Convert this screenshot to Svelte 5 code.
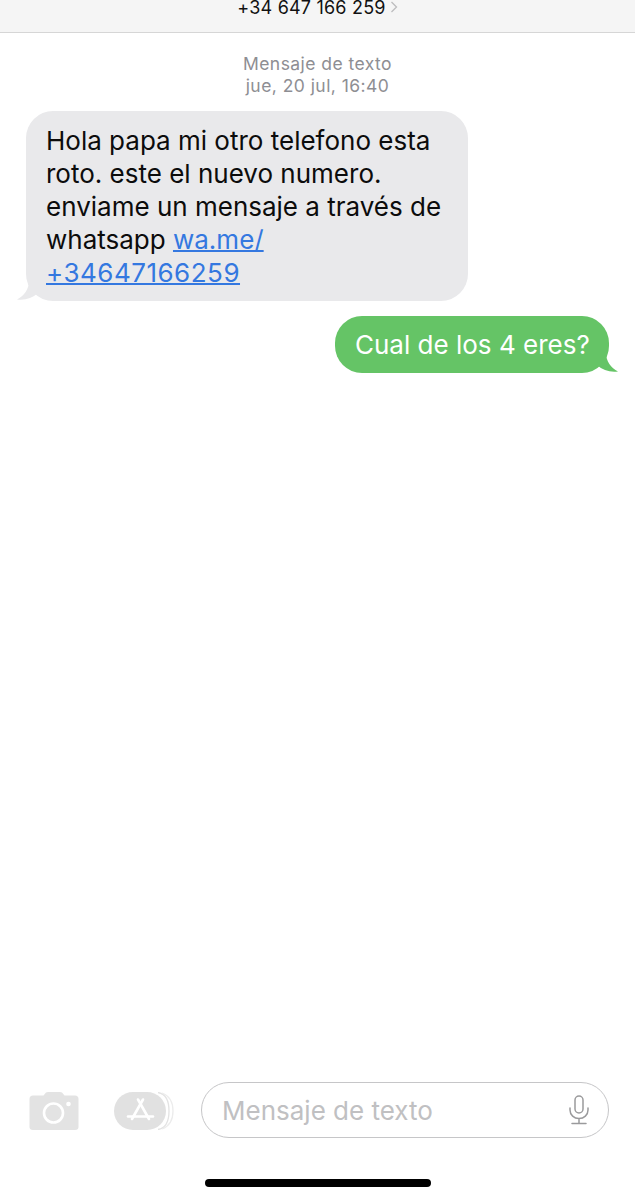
<script>
  const received = ['Hola papa mi otro telefono esta', 'roto. este el nuevo numero.', 'enviame un mensaje a través de'];
</script>

<div class="screen">
  <header class="top">
    <span class="number">+34 647 166 259</span>
    <svg class="chev" width="8" height="12" viewBox="0 0 8 12"><path d="M1.5 1 L6.5 6 L1.5 11" fill="none" stroke="#bcbcbe" stroke-width="1.3"/></svg>
  </header>

  <main class="thread">
    <div class="stamp">
      <div>Mensaje de texto</div>
      <div>jue, 20 jul, 16:40</div>
    </div>

    <div class="row left">
      <div class="bubble in">
        {#each received as line}<div>{line}</div>{/each}
        <div>whatsapp <a href="#wa">wa.me/</a></div>
        <div><a class="digits" href="#wa">+34647166259</a></div>
        <svg class="tail tail-in" width="22" height="20" viewBox="0 0 22 20"><path d="M12 0 C12 8 7 15 0 18.500 C8 19.500 15 17.500 21 12 L21 0 Z" fill="#e9e9eb"/></svg>
      </div>
    </div>

    <div class="row right">
      <div class="bubble out">
        Cual de los 4 eres?
        <svg class="tail tail-out" width="22" height="20" viewBox="0 0 22 20"><path d="M10 0 C10 8 15 15 22 18.500 C14 19.500 7 17.500 1 12 L1 0 Z" fill="#65c466"/></svg>
      </div>
    </div>
  </main>

  <footer class="composer">
    <svg class="cam" width="50" height="38" viewBox="0 0 50 38">
      <path d="M4 3.500 H14.500 L17 0.500 Q18 0 19 0 H31 Q32 0 33 0.500 L35.500 3.500 H46 Q49.500 3.500 49.500 7 V35 Q49.500 38 46 38 H4 Q0.500 38 0.500 35 V7 Q0.500 3.500 4 3.500 Z" fill="#e3e3e3"/>
      <circle cx="24.500" cy="21" r="9.500" fill="none" stroke="#fff" stroke-width="2.600"/>
      <circle cx="39.500" cy="12" r="2.300" fill="#fff"/>
    </svg>

    <svg class="store" width="60" height="38" viewBox="0 0 60 38">
      <path d="M44 0.500 C53 2 55 10 55 19 C55 28 53 36 44 37.500" fill="none" stroke="#e3e3e3" stroke-width="1.300"/>
      <path d="M48 1 C56 4 59 11 59 19 C59 27 56 34 48 37" fill="none" stroke="#ececec" stroke-width="1.300"/>
      <rect x="0" y="0" width="52" height="38" rx="19" fill="#e1e1e1"/>
      <g fill="none" stroke="#fff" stroke-width="2.600" stroke-linecap="round">
        <path d="M29 7.500 L18 27"/>
        <path d="M24 7.500 L35 27"/>
        <path d="M14 24.500 H39"/>
      </g>
    </svg>

    <div class="input">
      <span class="placeholder">Mensaje de texto</span>
      <svg class="mic" width="22" height="30" viewBox="0 0 22 30">
        <rect x="7" y="1" width="8" height="17" rx="4" fill="none" stroke="#9a9a9c" stroke-width="1.500"/>
        <path d="M2 13 V15 C2 20 6 23.500 11 23.500 C16 23.500 20 20 20 15 V13 M11 23.500 V28.500 M4 28.500 H18" fill="none" stroke="#9a9a9c" stroke-width="1.500" stroke-linecap="round"/>
      </svg>
    </div>
  </footer>

  <div class="home-wrap"><div class="home"></div></div>
</div>

<style>
  :global(body) {
    margin: 0;
    background: #fff;
  }
  .screen {
    width: 635px;
    height: 1200px;
    display: flex;
    flex-direction: column;
    overflow: hidden;
    font-family: Inter, "Liberation Sans", sans-serif;
    background: #fff;
  }
  .top {
    height: 32px;
    flex: none;
    background: #f5f5f5;
    border-bottom: 1px solid #d6d6d6;
    display: flex;
    justify-content: center;
    align-items: flex-start;
    gap: 4px;
  }
  .number {
    font-size: 18px;
    line-height: 16px;
    letter-spacing: 0.2px;
    color: #111;
  }
  .chev {
    margin-top: 1px;
  }
  .thread {
    flex: 1;
    display: flex;
    flex-direction: column;
  }
  .stamp {
    margin-top: 20px;
    text-align: center;
    color: #8e8e93;
    font-size: 17.500px;
    letter-spacing: 0.45px;
    line-height: 22px;
  }
  .row {
    display: flex;
  }
  .left {
    padding-left: 26px;
    margin-top: 14px;
  }
  .right {
    justify-content: flex-end;
    padding-right: 26px;
    margin-top: 15px;
  }
  .bubble {
    position: relative;
    box-sizing: border-box;
    font-size: 26px;
    line-height: 33px;
    border-radius: 27px;
    white-space: nowrap;
  }
  .in {
    width: 442px;
    height: 190px;
    padding: 13px 20px;
    background: #e9e9eb;
    color: #0c0c0c;
  }
  .in a {
    color: #3478e0;
    text-decoration: underline;
    text-decoration-thickness: 1.500px;
  }
  .in .digits {
    letter-spacing: 0.5px;
  }
  .out {
    width: 274px;
    height: 57px;
    padding: 12px 20px;
    background: #65c466;
    color: #fff;
  }
  .tail {
    position: absolute;
    bottom: 0;
  }
  .tail-in {
    left: -9px;
  }
  .tail-out {
    right: -9px;
  }
  .composer {
    flex: none;
    display: flex;
    align-items: center;
    padding: 0 26px 0 29px;
    height: 56px;
  }
  .cam {
    flex: none;
    margin-top: 1px;
  }
  .store {
    flex: none;
    margin-left: 35px;
    margin-top: 1px;
  }
  .input {
    flex: 1;
    height: 56px;
    box-sizing: border-box;
    margin-left: 27px;
    border: 1.500px solid #c6c6c8;
    border-radius: 28px;
    padding: 0 18px 0 20px;
    display: flex;
    align-items: center;
    justify-content: space-between;
  }
  .placeholder {
    font-size: 26px;
    color: #c0c0c2;
  }
  .mic {
    flex: none;
  }
  .home-wrap {
    flex: none;
    height: 62px;
    display: flex;
    justify-content: center;
    align-items: flex-start;
  }
  .home {
    width: 226px;
    height: 8px;
    margin-top: 41px;
    border-radius: 4px;
    background: #000;
  }
</style>
